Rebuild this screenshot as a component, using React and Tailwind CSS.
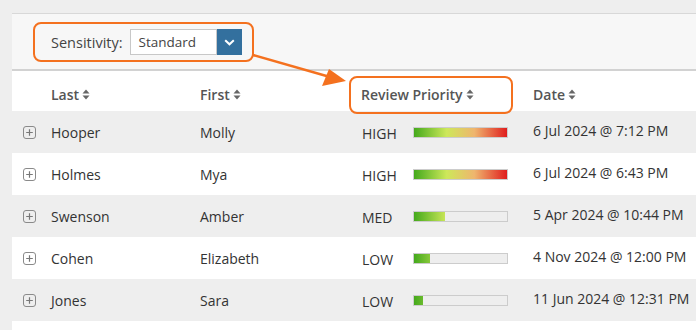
import React from "react";

const rows = [
  { last: "Hooper", first: "Molly", pr: "HIGH", pct: 100, date: "6 Jul 2024 @ 7:12 PM" },
  { last: "Holmes", first: "Mya", pr: "HIGH", pct: 100, date: "6 Jul 2024 @ 6:43 PM" },
  { last: "Swenson", first: "Amber", pr: "MED", pct: 33, date: "5 Apr 2024 @ 10:44 PM" },
  { last: "Cohen", first: "Elizabeth", pr: "LOW", pct: 17, date: "4 Nov 2024 @ 12:00 PM" },
  { last: "Jones", first: "Sara", pr: "LOW", pct: 10, date: "11 Jun 2024 @ 12:31 PM" },
];

function Sort() {
  return (
    <svg width="8" height="11" viewBox="0 0 8 11" className="ml-[3px] inline-block">
      <path d="M4 0.5 L7.5 4.5 H0.5 Z" fill="#666" />
      <path d="M4 10.5 L7.5 6.5 H0.5 Z" fill="#666" />
    </svg>
  );
}

function Plus() {
  return (
    <svg width="13" height="13" viewBox="0 0 13 13">
      <rect x="0.5" y="0.5" width="12" height="12" rx="2.5" fill="none" stroke="#8a8a8a" />
      <path d="M6.5 3.2 V9.8 M3.2 6.5 H9.8" stroke="#777" strokeWidth="1.2" />
    </svg>
  );
}

function Bar({ pct }) {
  return (
    <div className="w-[95px] h-[11px] border border-[#cccccc] bg-[#eeeeee]">
      <div className="h-full overflow-hidden" style={{ width: pct + "%" }}>
        <div className="w-[93px] h-full bg-[linear-gradient(to_right,#44a91c_0%,#cde85a_35%,#efb56e_65%,#e01e1e_100%)]" />
      </div>
    </div>
  );
}

export default function App() {
  return (
    <div className="relative w-[696px] h-[330px] overflow-hidden bg-[#eeeeee] pl-[12px] pt-[13px] font-['Open_Sans',sans-serif] text-[#333]">
      <div className="bg-white h-full">
        <div className="h-[58px] bg-[#f7f7f7] border-t border-t-[#d8d8d8] border-b-2 border-b-[#d2d2d2] flex items-center pl-[39px]">
          <span className="text-[14.5px] text-[#444] pt-[2px]">Sensitivity:</span>
          <div className="ml-[7px] flex h-[26px] mt-[1px]">
            <div className="w-[87px] h-full border border-[#c8c8c8] bg-white flex items-center pl-[8px] text-[13.5px] text-[#444]">
              Standard
            </div>
            <div className="w-[25px] h-full bg-[#33709e] flex items-center justify-center">
              <svg width="11" height="7" viewBox="0 0 11 7">
                <path d="M1.2 1.2 L5.5 5.3 L9.8 1.2" fill="none" stroke="white" strokeWidth="2" />
              </svg>
            </div>
          </div>
        </div>
        <div className="grid grid-cols-[39px_149px_161px_172px_1fr] h-[40px] items-center pt-[7px] text-[14px] font-semibold text-[#555]">
          <div />
          <div className="flex items-center">Last<Sort /></div>
          <div className="flex items-center">First<Sort /></div>
          <div className="flex items-center">Review Priority<Sort /></div>
          <div className="flex items-center">Date<Sort /></div>
        </div>
        {rows.map((r, i) => (
          <div
            key={i}
            className={
              "grid grid-cols-[39px_149px_161px_172px_1fr] h-[42px] items-center text-[14px] " +
              (i % 2 === 0 ? "bg-[#eeeeee]" : "bg-white")
            }
          >
            <div className="pl-[11px] flex items-center pt-[1px]"><Plus /></div>
            <div>{r.last}</div>
            <div>{r.first}</div>
            <div className="flex items-center">
              <span className="w-[52px] pl-[1px] pt-[2px]">{r.pr}</span>
              <Bar pct={r.pct} />
            </div>
            <div className="pb-[4px]">{r.date}</div>
          </div>
        ))}
      </div>

      <div className="absolute left-[33px] top-[22px] w-[221px] h-[40px] border-[2.5px] border-[#f4711f] rounded-[8px]" />
      <div className="absolute left-[349px] top-[76px] w-[164px] h-[38px] border-[2.5px] border-[#f4711f] rounded-[8px]" />
      <svg className="absolute left-0 top-0" width="696" height="330">
        <line x1="253" y1="55" x2="330" y2="77" stroke="#f4711f" strokeWidth="2.5" />
        <path d="M346 81 L322 86 L329 69 Z" fill="#f4711f" />
      </svg>
    </div>
  );
}
